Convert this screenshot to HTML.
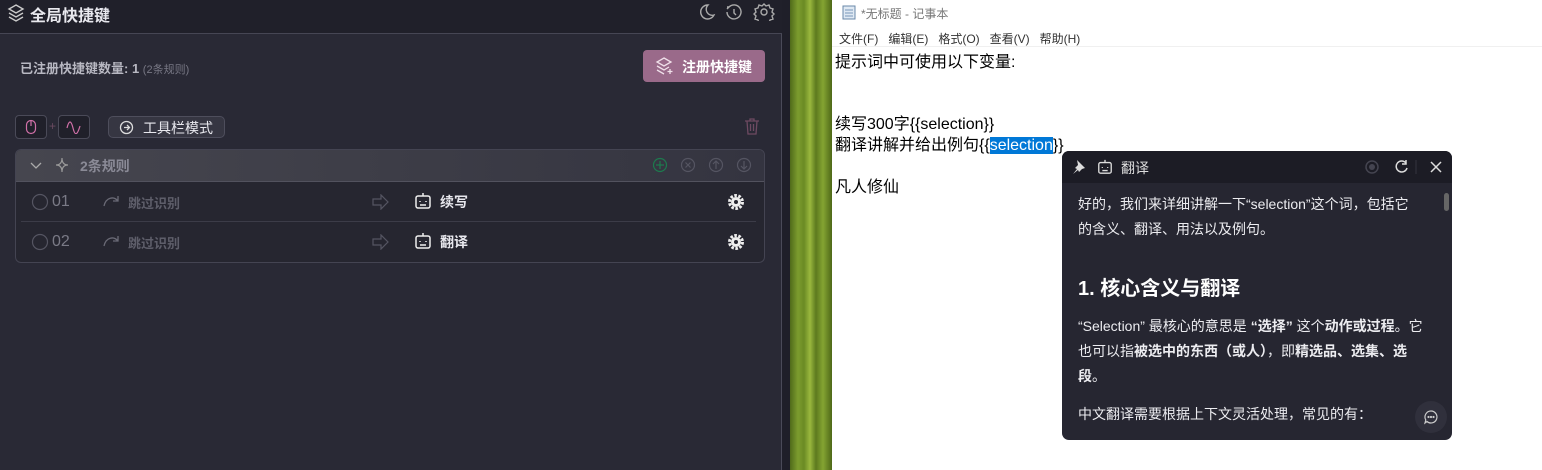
<!DOCTYPE html><html><head><meta charset="utf-8"><style>
*{box-sizing:border-box;margin:0;padding:0}
body{width:1542px;height:470px;overflow:hidden;position:relative;background:#fff;font-family:"Liberation Sans","Noto Sans CJK SC",sans-serif}
.abs{position:absolute}
#left{left:0;top:0;width:782px;height:470px;background:#292935;border-right:1px solid #4a4a58}
#top{left:0;top:0;width:782px;height:34px;background:#20202a;border-bottom:1px solid #464654}
#strip{left:782px;top:0;width:8px;height:470px;background:#1f1f29}
#bamboo{left:790px;top:0;width:42px;height:470px;background:linear-gradient(90deg,#4f6a1a 0,#7c9c2e 8px,#6a8a24 14px,#9ab83e 20px,#5d7a1e 26px,#84a432 33px,#4e6818 42px)}
.t{color:#e8e8ee;white-space:nowrap}
.g{color:#8a8a96}
svg{position:absolute}
#np{left:832px;top:0;width:710px;height:470px;background:#fff}
.npt{font-size:16px;color:#000;left:835px;position:absolute;white-space:nowrap}
#pop{left:1062px;top:151px;width:390px;height:289px;background:#262631;border-radius:7px;overflow:hidden}
#poph{left:0;top:0;width:390px;height:32px;background:#1c1c25}
.pp{position:absolute;left:16px;color:#ececf0;font-size:14px;white-space:nowrap}
</style></head><body>
<div id="left" class="abs"></div>
<div id="top" class="abs"></div>
<svg style="left:7px;top:3px" width="18" height="20" viewBox="0 0 18 20" fill="none" stroke="#ccc" stroke-width="1.4"><path d="M9 2L16 6 9 10 2 6Z"/><path d="M2 10l7 4 7-4"/><path d="M2 14l7 4 7-4"/></svg>
<div class="abs t" style="left:30px;top:2px;font-size:16px;font-weight:bold">全局快捷键</div>
<svg style="left:698px;top:3px" width="80" height="18" viewBox="0 0 80 18" fill="none" stroke="#aaa" stroke-width="1.4"><path d="M10 2a7 7 0 1 0 6 10A6 6 0 0 1 10 2z"/><path d="M31 4a7 7 0 1 1-2 5M31 4l-2 2m2-2h-2" /><path d="M36 6v4l2 2"/><circle cx="66" cy="9" r="3"/><path d="M66 1l2 2 3-1 1 3 3 1-1 3 2 2-2 2 1 3-3 1-1 3-3-1-2 2-2-2-3 1-1-3-3-1 1-3-2-2 2-2-1-3 3-1 1-3 3 1z"/></svg>
<div class="abs" style="left:20px;top:58px;font-size:13px;font-weight:bold;color:#b8b8c2">已注册快捷键数量: 1 <span style="font-size:11px;color:#777784;font-weight:normal">(2条规则)</span></div>
<div class="abs" style="left:643px;top:50px;width:122px;height:32px;background:#9a6a8a;border-radius:4px"></div>
<svg style="left:655px;top:57px" width="18" height="18" viewBox="0 0 18 18" fill="none" stroke="#f0e0ea" stroke-width="1.3"><path d="M9 1L16 5 9 9 2 5Z"/><path d="M2 9l7 4 5-3"/><path d="M2 13l7 4"/><path d="M15 12v5M12.5 14.5h5"/></svg>
<div class="abs t" style="left:682px;top:57px;font-size:14px;font-weight:bold;color:#fff">注册快捷键</div>
<div class="abs" style="left:15px;top:115px;width:32px;height:24px;border:1px solid #4a4a58;border-radius:4px;background:#20202a"></div>
<svg style="left:25px;top:119px" width="12" height="16" viewBox="0 0 12 16" fill="none" stroke="#d070a8" stroke-width="1.2"><rect x="1.5" y="1.5" width="9" height="13" rx="4.5"/><path d="M6 2v5"/></svg>
<div class="abs" style="left:49px;top:119px;color:#6a4a60;font-size:12px">+</div>
<div class="abs" style="left:58px;top:115px;width:32px;height:24px;border:1px solid #4a4a58;border-radius:4px;background:#20202a"></div>
<svg style="left:66px;top:120px" width="16" height="14" viewBox="0 0 16 14" fill="none" stroke="#d070a8" stroke-width="1.2"><path d="M1 8c2-8 4-8 6 0s4 8 7 -2"/></svg>
<div class="abs" style="left:108px;top:116px;width:117px;height:22px;border:1px solid #4e4e5c;border-radius:5px;background:#363642"></div>
<svg style="left:119px;top:120px" width="15" height="15" viewBox="0 0 15 15" fill="none" stroke="#ddd" stroke-width="1.3"><circle cx="7.5" cy="7.5" r="6"/><path d="M5 7.5h5M8 5l2.5 2.5L8 10"/></svg>
<div class="abs t" style="left:143px;top:118px;font-size:14px">工具栏模式</div>
<svg style="left:744px;top:117px" width="16" height="18" viewBox="0 0 16 18" fill="none" stroke="#6e4a62" stroke-width="1.3"><path d="M1 4h14M6 4V2h4v2M3 4l1 13h8l1-13M6.5 7v7M9.5 7v7"/></svg>
<div class="abs" style="left:15px;top:149px;width:750px;height:114px;border:1px solid #444452;border-radius:6px;overflow:hidden;background:#262630">
<div style="height:32px;background:linear-gradient(90deg,#46464f,#3d3d47 50%,#343440);border-bottom:1px solid #52525e"></div>
<div style="position:absolute;left:5px;top:71px;width:735px;height:1px;background:#3c3c48"></div>
</div>
<svg style="left:29px;top:158px" width="14" height="14" viewBox="0 0 14 14" fill="none" stroke="#aaa" stroke-width="1.3"><path d="M2 5l5 5 5-5"/></svg>
<svg style="left:55px;top:156px" width="16" height="18" viewBox="0 0 16 18" fill="none" stroke="#999" stroke-width="1.2"><path d="M7 2c0 5-2 7-6 7 4 0 6 2 6 7 0-5 2-7 6-7-4 0-6-2-6-7z"/></svg>
<div class="abs g" style="left:80px;top:156px;font-size:14px;font-weight:bold;color:#8a8a96">2条规则</div>
<svg style="left:652px;top:157px" width="102" height="16" viewBox="0 0 102 16" fill="none" stroke-width="1.2"><circle cx="8" cy="8" r="6.5" stroke="#1d7a4e"/><path d="M8 4v8M4 8h8" stroke="#1d7a4e"/><g stroke="#555562"><circle cx="36" cy="8" r="6.5"/><path d="M33.5 5.5l5 5M38.5 5.5l-5 5"/><circle cx="64" cy="8" r="6.5"/><path d="M64 12V4M61 7l3-3 3 3"/><circle cx="92" cy="8" r="6.5"/><path d="M92 4v8M89 9l3 3 3-3"/></g></svg>
<svg style="left:31px;top:193px" width="18" height="18"><circle cx="9" cy="9" r="7.5" fill="none" stroke="#555562" stroke-width="1.2"/></svg>
<div class="abs g" style="left:52px;top:193px;font-size:16px;color:#7a7a86">01</div>
<svg style="left:31px;top:233px" width="18" height="18"><circle cx="9" cy="9" r="7.5" fill="none" stroke="#555562" stroke-width="1.2"/></svg>
<div class="abs g" style="left:52px;top:233px;font-size:16px;color:#7a7a86">02</div>
<svg style="left:102px;top:194px" width="20" height="14" viewBox="0 0 20 14" fill="none" stroke="#6a6a76" stroke-width="1.3"><path d="M2 12C4 3 12 2 16 7M16 2v5h-5"/></svg>
<svg style="left:102px;top:234px" width="20" height="14" viewBox="0 0 20 14" fill="none" stroke="#6a6a76" stroke-width="1.3"><path d="M2 12C4 3 12 2 16 7M16 2v5h-5"/></svg>
<div class="abs" style="left:128px;top:193px;font-size:13px;font-weight:bold;color:#5e5e6a">跳过识别</div>
<div class="abs" style="left:128px;top:233px;font-size:13px;font-weight:bold;color:#5e5e6a">跳过识别</div>
<svg style="left:372px;top:194px" width="18" height="16" viewBox="0 0 18 16" fill="none" stroke="#555562" stroke-width="1.2"><path d="M1 5h8V1l7 7-7 7v-4H1z"/></svg>
<svg style="left:372px;top:234px" width="18" height="16" viewBox="0 0 18 16" fill="none" stroke="#555562" stroke-width="1.2"><path d="M1 5h8V1l7 7-7 7v-4H1z"/></svg>
<svg style="left:414px;top:192px" width="18" height="18" viewBox="0 0 18 18" fill="none" stroke="#eee" stroke-width="1.5"><rect x="2" y="4" width="14" height="12" rx="2"/><path d="M9 4V1M6 9v1M12 9v1M6 13h6"/></svg>
<svg style="left:414px;top:232px" width="18" height="18" viewBox="0 0 18 18" fill="none" stroke="#eee" stroke-width="1.5"><rect x="2" y="4" width="14" height="12" rx="2"/><path d="M9 4V1M6 9v1M12 9v1M6 13h6"/></svg>
<div class="abs t" style="left:440px;top:192px;font-size:14px;font-weight:bold">续写</div>
<div class="abs t" style="left:440px;top:232px;font-size:14px;font-weight:bold">翻译</div>
<svg style="left:727px;top:193px" width="18" height="18" viewBox="0 0 18 18"><circle cx="9" cy="9" r="6.5" fill="none" stroke="#eee" stroke-width="3" stroke-dasharray="2.6 1.5"/><circle cx="9" cy="9" r="5" fill="#eee"/><circle cx="9" cy="9" r="2" fill="#262630"/></svg>
<svg style="left:727px;top:233px" width="18" height="18" viewBox="0 0 18 18"><circle cx="9" cy="9" r="6.5" fill="none" stroke="#eee" stroke-width="3" stroke-dasharray="2.6 1.5"/><circle cx="9" cy="9" r="5" fill="#eee"/><circle cx="9" cy="9" r="2" fill="#262630"/></svg>
<div id="strip" class="abs"></div>
<div id="bamboo" class="abs"></div>
<div id="np" class="abs"></div>
<div class="abs" style="left:832px;top:46px;width:710px;height:1px;background:#f0f0f0"></div>
<svg style="left:841px;top:4px" width="16" height="16" viewBox="0 0 16 16"><rect x="2" y="2" width="12" height="13" fill="#dfe9f3" stroke="#6a88a8"/><path d="M4 6h8M4 9h8M4 12h8" stroke="#7a98b8"/></svg>
<div class="abs" style="left:861px;top:5px;font-size:12px;color:#777">*无标题 - 记事本</div>
<div class="abs" style="left:839px;top:30px;font-size:12px;color:#333;word-spacing:0">文件(F)&nbsp;&nbsp;&nbsp;编辑(E)&nbsp;&nbsp;&nbsp;格式(O)&nbsp;&nbsp;&nbsp;查看(V)&nbsp;&nbsp;&nbsp;帮助(H)</div>
<div class="npt" style="top:48px">提示词中可使用以下变量:</div>
<div class="npt" style="top:110px">续写300字{{selection}}</div>
<div class="npt" style="top:131px">翻译讲解并给出例句{{<span style="background:#0078d7;color:#fff">selection</span>}}</div>
<div class="npt" style="top:173px">凡人修仙</div>
<div id="pop" class="abs">
<div id="poph" class="abs"></div>
<svg style="left:8px;top:8px" width="16" height="16" viewBox="0 0 16 16"><path d="M7 1l8 8-3 1-3 3-1-2-5 4 4-5-2-1 3-3z" fill="#ddd"/></svg>
<svg style="left:35px;top:8px" width="16" height="16" viewBox="0 0 18 18" fill="none" stroke="#ddd" stroke-width="1.5"><rect x="2" y="4" width="14" height="12" rx="2"/><path d="M9 4V1M6 9v1M12 9v1M6 13h6"/></svg>
<div class="abs" style="left:59px;top:7px;font-size:14px;color:#ddd">翻译</div>
<svg style="left:300px;top:7px" width="85" height="18" viewBox="0 0 85 18" fill="none" stroke-width="1.5"><circle cx="10" cy="9" r="6" stroke="#444450"/><circle cx="10" cy="9" r="3" fill="#444450" stroke="none"/><path d="M44 5a5.5 5.5 0 1 0 1 5M44 2v4h-4" stroke="#ddd"/><path d="M54 2v14" stroke="#333340" stroke-width="1"/><path d="M69 4l10 10M79 4L69 14" stroke="#ddd"/></svg>
<div class="pp" style="top:41px;line-height:25px">好的，我们来详细讲解一下“selection”这个词，包括它<br>的含义、翻译、用法以及例句。</div>
<div class="pp" style="top:121px;font-size:20px;font-weight:bold;color:#fff">1. 核心含义与翻译</div>
<div class="pp" style="top:163px;line-height:25px">“Selection” 最核心的意思是 <b>“选择”</b> 这个<b>动作或过程</b>。它<br>也可以指<b>被选中的东西（或人）</b>，即<b>精选品、选集、选<br>段</b>。</div>
<div class="pp" style="top:253px">中文翻译需要根据上下文灵活处理，常见的有：</div>
<div class="abs" style="left:382px;top:42px;width:5px;height:18px;background:#666;border-radius:3px"></div>
<div class="abs" style="left:353px;top:250px;width:32px;height:32px;border-radius:16px;background:#30303c"></div>
<svg style="left:361px;top:258px" width="16" height="16" viewBox="0 0 16 16" fill="none" stroke="#ccc" stroke-width="1.2"><path d="M8 2a6 6 0 1 1-4 10.5L2 14l.8-3A6 6 0 0 1 8 2z"/><circle cx="5.5" cy="8" r=".5"/><circle cx="8" cy="8" r=".5"/><circle cx="10.5" cy="8" r=".5"/></svg>
</div>
</body></html>
